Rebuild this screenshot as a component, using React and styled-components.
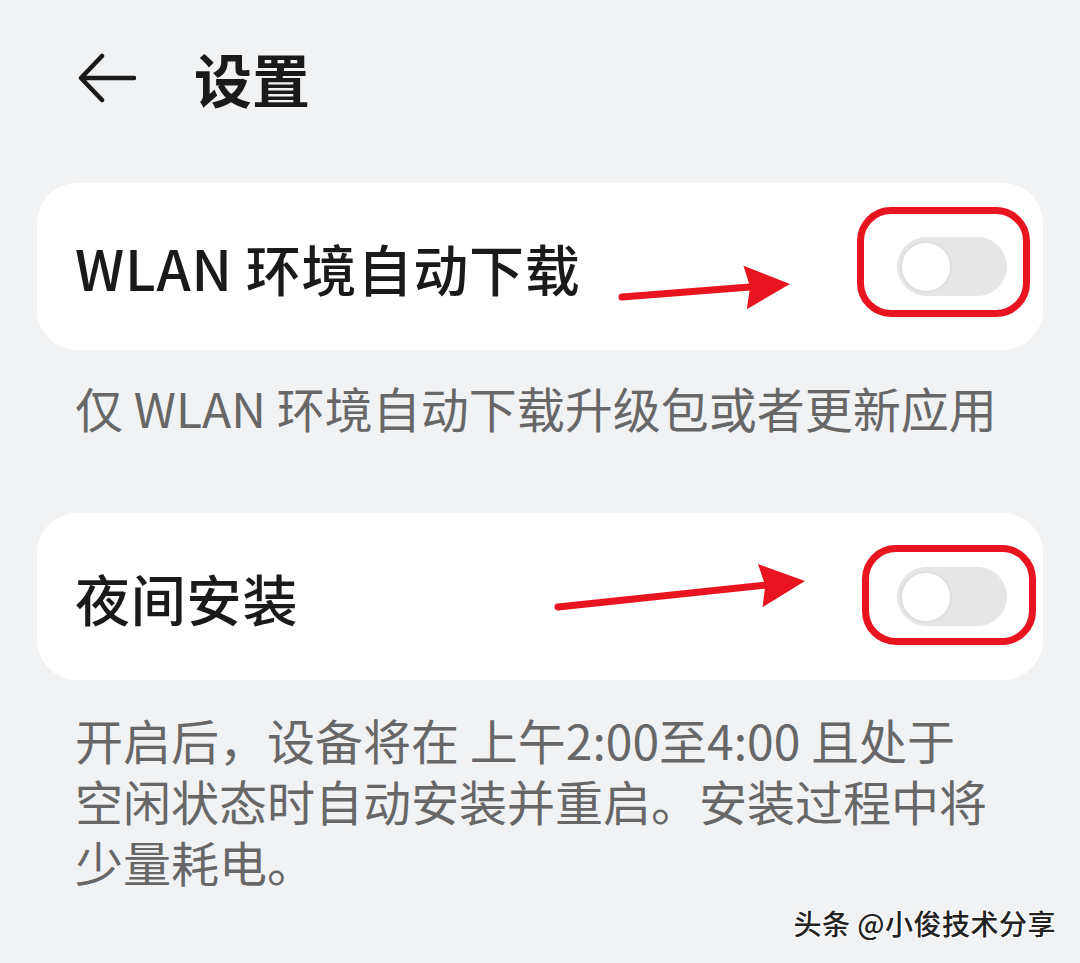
import React from "react";
import styled, { createGlobalStyle } from "styled-components";

const GlobalStyle = createGlobalStyle`
  html, body {
    margin: 0;
    padding: 0;
    background: #f1f2f4;
  }
  body {
    font-family: "Noto Sans CJK SC", "Noto Sans", sans-serif;
    color: #1b1b1b;
  }
`;

const Page = styled.div`
  position: relative;
  width: 1080px;
  height: 963px;
  padding: 0 37px;
  box-sizing: border-box;
  background: #f1f2f4;
  overflow: hidden;
`;

const Header = styled.div`
  display: flex;
  align-items: center;
  height: 156px;
  margin-bottom: 27px;
  padding-left: 41px;
  gap: 58px;
`;

const BackButton = styled.button`
  display: flex;
  align-items: center;
  justify-content: center;
  padding: 0;
  border: none;
  background: none;
  width: 58px;
  height: 56px;
`;

const Title = styled.h1`
  margin: 0;
  font-size: 58px;
  font-weight: 700;
  line-height: 1;
  color: #1a1a1a;
`;

const Card = styled.div`
  position: relative;
  display: flex;
  align-items: center;
  justify-content: space-between;
  height: 167px;
  padding: 0 36px 0 38px;
  box-sizing: border-box;
  background: #ffffff;
  border-radius: 40px;
`;

const CardLabel = styled.span`
  font-size: 55px;
  font-weight: 500;
  color: #1a1a1a;
  letter-spacing: 0.8px;
`;

const Description = styled.p`
  margin: 0;
  padding: ${(p) => p.$pad};
  font-size: 48px;
  line-height: 61px;
  color: #676767;
  white-space: nowrap;
`;

const ToggleWrap = styled.div`
  position: relative;
  width: 110px;
  height: 59px;
`;

const Track = styled.div`
  width: 100%;
  height: 100%;
  border-radius: 30px;
  background: #e6e6e6;
  display: flex;
  align-items: center;
  padding-left: 3px;
  box-sizing: border-box;
`;

const Knob = styled.div`
  width: 52px;
  height: 52px;
  border-radius: 50%;
  background: #ffffff;
  border: 2px solid #dedede;
  box-sizing: border-box;
`;

const Highlight = styled.div`
  position: absolute;
  top: ${(p) => p.$top}px;
  bottom: ${(p) => p.$bottom}px;
  left: ${(p) => p.$left}px;
  right: ${(p) => p.$right}px;
  border: 7px solid #e8141f;
  border-radius: 34px;
  pointer-events: none;
`;

const ArrowLayer = styled.svg`
  position: absolute;
  left: 0;
  top: 0;
  width: 100%;
  height: 100%;
  overflow: visible;
  pointer-events: none;
`;

const Watermark = styled.div`
  position: absolute;
  right: 24px;
  bottom: 20px;
  font-size: 28px;
  font-weight: 500;
  color: #222;
  letter-spacing: 0.5px;
  text-shadow: 1px 1px 0 #fff, -1px -1px 0 #fff, 1px -1px 0 #fff, -1px 1px 0 #fff;
`;

function BackArrow() {
  return (
    <svg width="58" height="54" viewBox="0 0 58 54" fill="none">
      <path
        d="M56 27H4M24 5L3 27L24 49"
        stroke="#1a1a1a"
        strokeWidth="4.5"
        strokeLinecap="round"
        strokeLinejoin="round"
      />
    </svg>
  );
}

function RedArrow({ x1, y1, x2, y2 }) {
  const ang = Math.atan2(y2 - y1, x2 - x1);
  const len = 50;
  const spread = 0.45;
  const bx = x2 - Math.cos(ang) * (len - 10);
  const by = y2 - Math.sin(ang) * (len - 10);
  const p1 = [x2 - Math.cos(ang - spread) * len, y2 - Math.sin(ang - spread) * len];
  const p2 = [x2 - Math.cos(ang + spread) * len, y2 - Math.sin(ang + spread) * len];
  return (
    <ArrowLayer>
      <line
        x1={x1}
        y1={y1}
        x2={bx}
        y2={by}
        stroke="#e8141f"
        strokeWidth="7"
        strokeLinecap="round"
      />
      <polygon
        points={`${x2},${y2} ${p1[0]},${p1[1]} ${bx},${by} ${p2[0]},${p2[1]}`}
        fill="#e8141f"
      />
    </ArrowLayer>
  );
}

function Toggle({ box }) {
  return (
    <ToggleWrap>
      <Track>
        <Knob />
      </Track>
      <Highlight $top={box[0]} $right={box[1]} $bottom={box[2]} $left={box[3]} />
    </ToggleWrap>
  );
}

export default function App() {
  return (
    <>
      <GlobalStyle />
      <Page>
        <Header>
          <BackButton>
            <BackArrow />
          </BackButton>
          <Title>设置</Title>
        </Header>

        <Card>
          <CardLabel>WLAN 环境自动下载</CardLabel>
          <RedArrow x1={585} y1={114} x2={753} y2={101} />
          <Toggle box={[-30, -23, -21, -40]} />
        </Card>
        <Description $pad="27px 0 75px 38px">
          仅 WLAN 环境自动下载升级包或者更新应用
        </Description>

        <Card>
          <CardLabel>夜间安装</CardLabel>
          <RedArrow x1={521} y1={94} x2={768} y2={68} />
          <Toggle box={[-22, -29, -19, -35]} />
        </Card>
        <Description $pad="29px 0 0 38px">
          开启后，设备将在 上午2:00至4:00 且处于
          <br />
          空闲状态时自动安装并重启。安装过程中将
          <br />
          少量耗电。
        </Description>

        <Watermark>头条 @小俊技术分享</Watermark>
      </Page>
    </>
  );
}
